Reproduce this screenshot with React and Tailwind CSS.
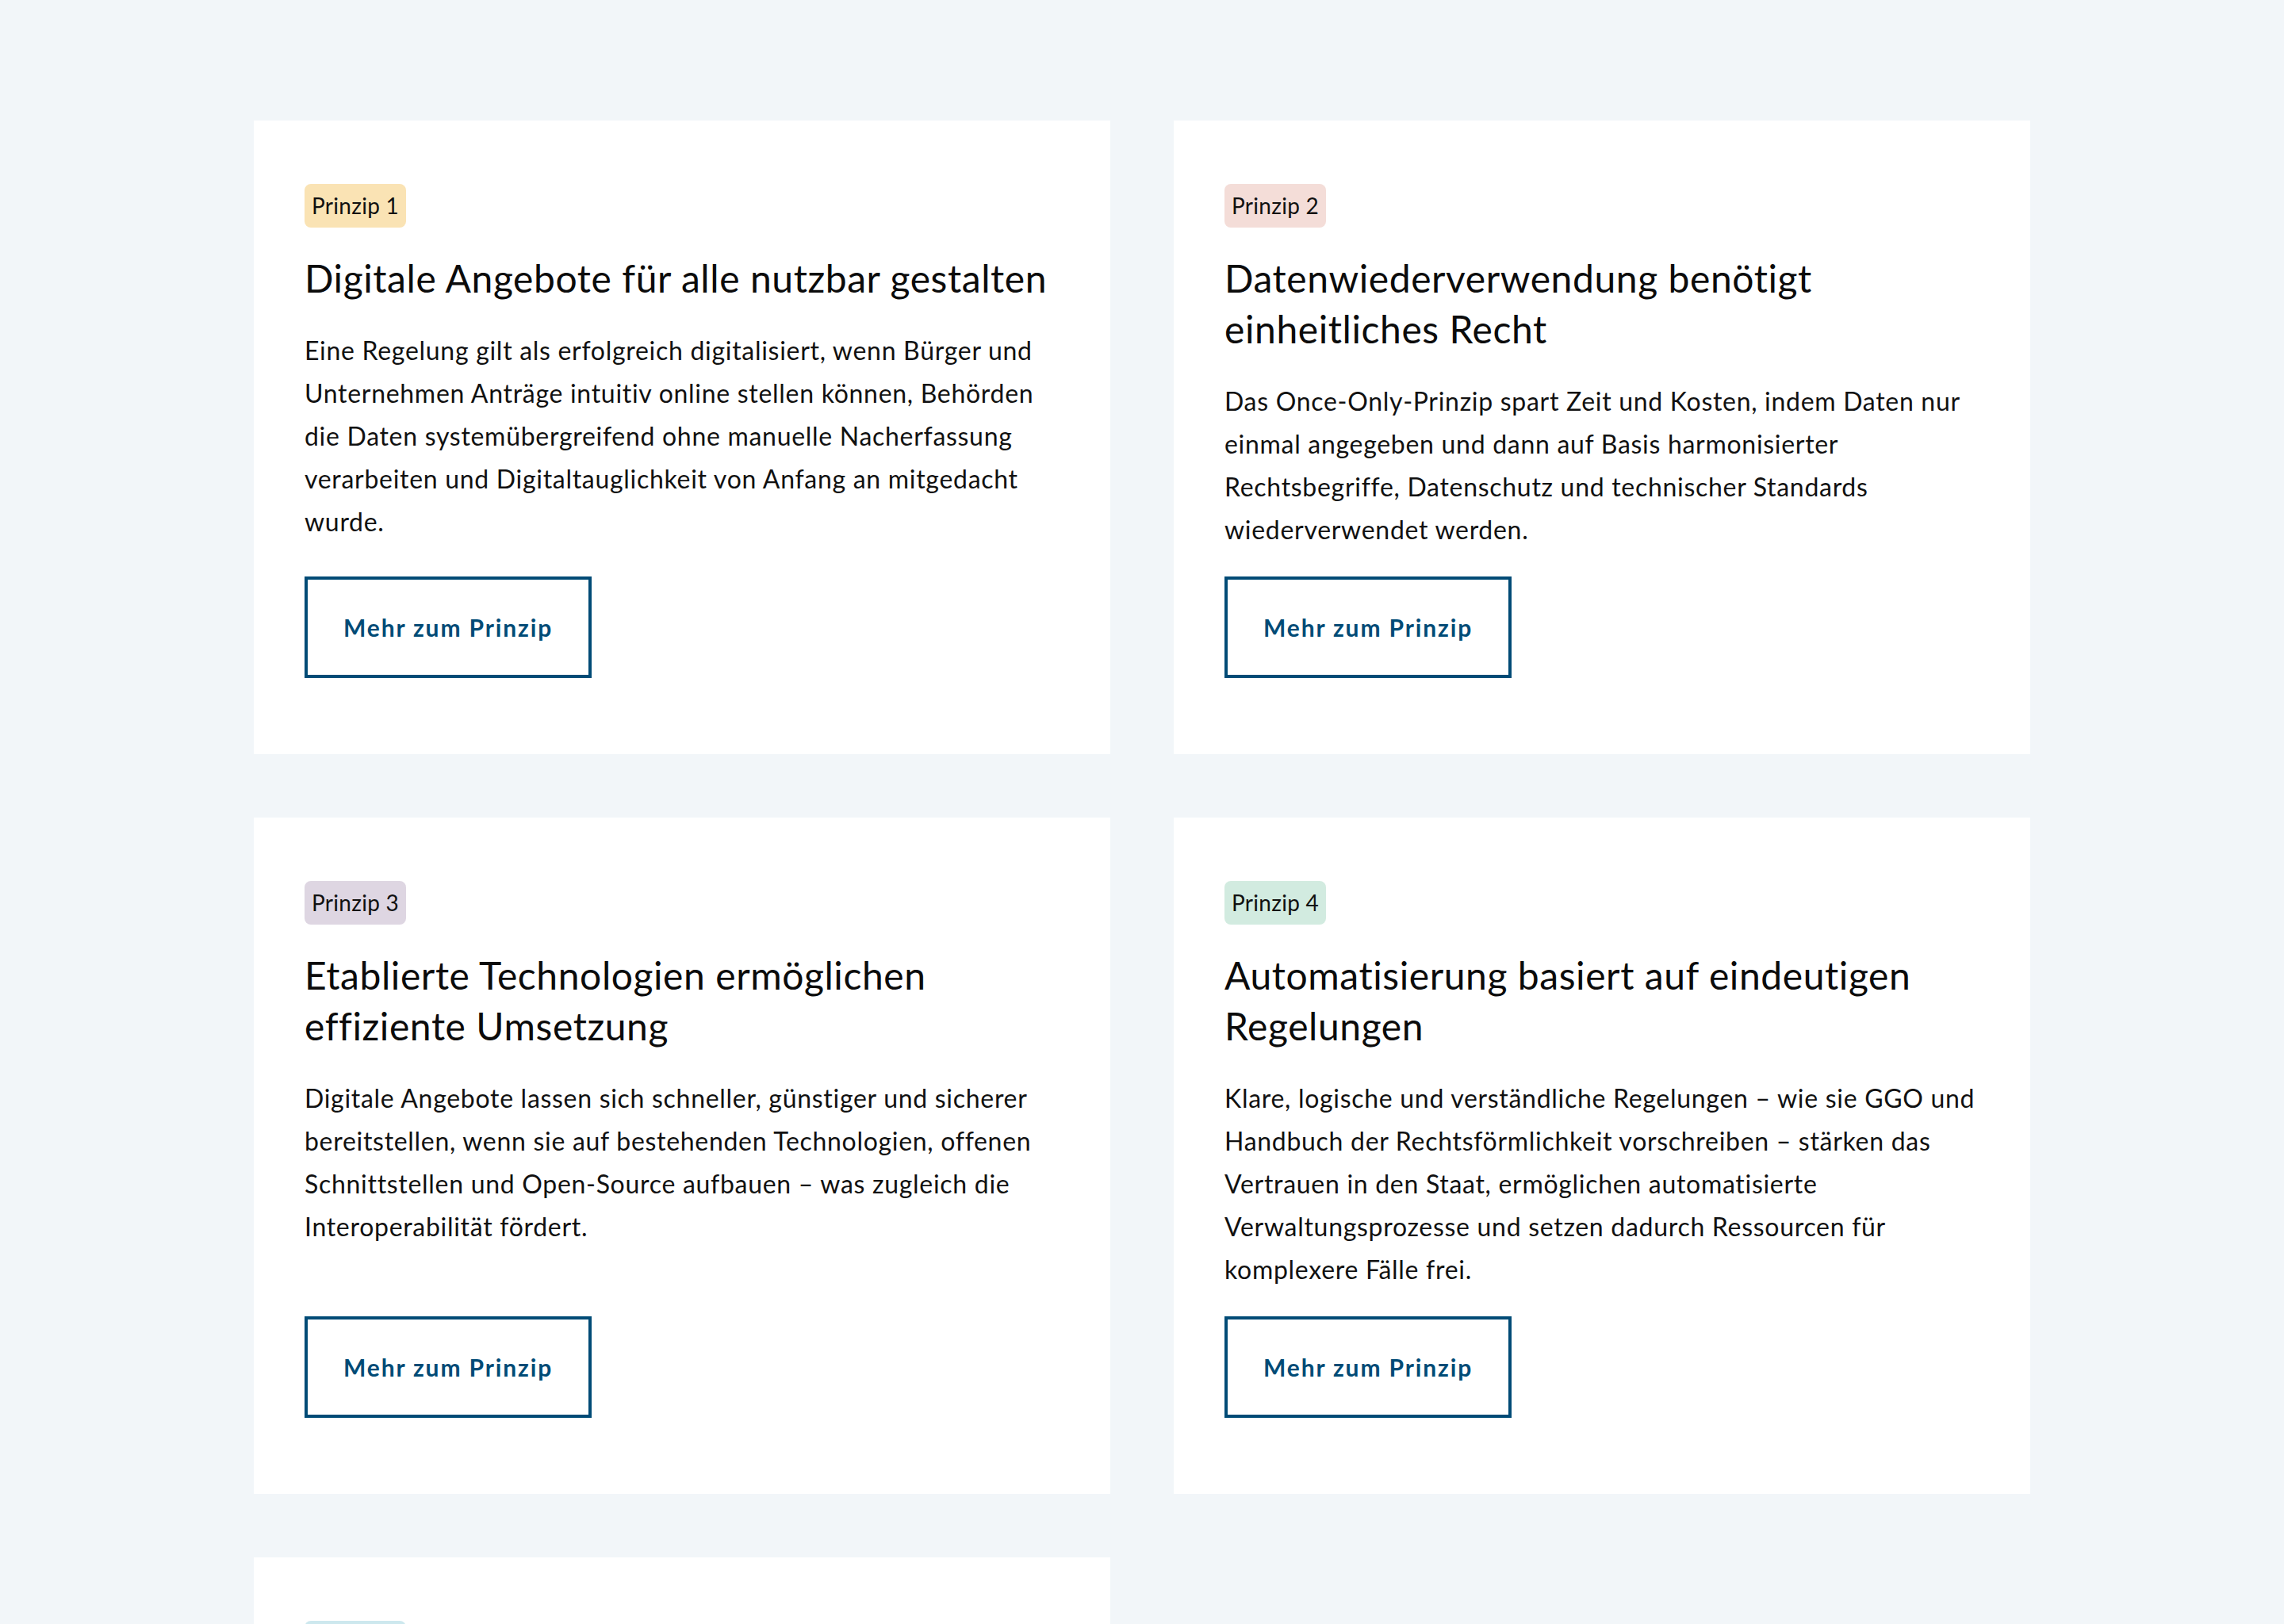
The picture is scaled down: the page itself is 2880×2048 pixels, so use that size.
const principles = [
  {
    label: "Prinzip 1",
    badge: "bg-[#fae3b4]",
    title: "Digitale Angebote für alle nutzbar gestalten",
    text: "Eine Regelung gilt als erfolgreich digitalisiert, wenn Bürger und Unternehmen Anträge intuitiv online stellen können, Behörden die Daten systemübergreifend ohne manuelle Nacherfassung verarbeiten und Digitaltauglichkeit von Anfang an mitgedacht wurde.",
  },
  {
    label: "Prinzip 2",
    badge: "bg-[#f4ddd8]",
    title: "Datenwiederverwendung benötigt einheitliches Recht",
    text: "Das Once-Only-Prinzip spart Zeit und Kosten, indem Daten nur einmal angegeben und dann auf Basis harmonisierter Rechtsbegriffe, Datenschutz und technischer Standards wiederverwendet werden.",
  },
  {
    label: "Prinzip 3",
    badge: "bg-[#ded6e2]",
    title: "Etablierte Technologien ermöglichen effiziente Umsetzung",
    text: "Digitale Angebote lassen sich schneller, günstiger und sicherer bereitstellen, wenn sie auf bestehenden Technologien, offenen Schnittstellen und Open-Source aufbauen – was zugleich die Interoperabilität fördert.",
  },
  {
    label: "Prinzip 4",
    badge: "bg-[#d2ebe0]",
    title: "Automatisierung basiert auf eindeutigen Regelungen",
    text: "Klare, logische und verständliche Regelungen – wie sie GGO und Handbuch der Rechtsförmlichkeit vorschreiben – stärken das Vertrauen in den Staat, ermöglichen automatisierte Verwaltungsprozesse und setzen dadurch Ressourcen für komplexere Fälle frei.",
  },
  {
    label: "Prinzip 5",
    badge: "bg-[#cde8ee]",
    title: "Datenschutz und Informationssicherheit von Anfang an mitdenken",
    text: "Digitale Verfahren schaffen Vertrauen, wenn Datenschutz und Informationssicherheit bereits bei der Gestaltung der Regelung berücksichtigt werden.",
  },
];

function PrincipleCard({ label, badge, title, text }) {
  return (
    <article className="flex flex-col bg-white px-[64px] pt-[80px] pb-[96px]">
      <span
        className={`self-start rounded-[8px] px-[9px] h-[55px] leading-[55px] text-[28px] tracking-[0.01em] text-[#111] ${badge}`}
      >
        {label}
      </span>
      <h3 className="mt-[32px] text-[48px] leading-[64px] tracking-[0.012em] font-normal text-[#0b0b0b]">
        {title}
      </h3>
      <p className="mt-[32px] mb-[32px] text-[32px] leading-[54px] tracking-[0.022em] text-[#111]">
        {text}
      </p>
      <a
        href="#"
        className="mt-auto self-start border-[4px] border-[#004b76] px-[45px] h-[128px] flex items-center text-[30px] tracking-[0.062em] font-bold text-[#004b76]"
      >
        Mehr zum Prinzip
      </a>
    </article>
  );
}

export default function App() {
  return (
    <div
      className="min-h-screen bg-[#f2f6f9] pt-[152px] pb-[160px]"
      style={{ fontFamily: "Lato, 'Open Sans', sans-serif" }}
    >
      <div className="mx-auto grid w-[2240px] grid-cols-2 gap-[80px]">
        {principles.map((p) => (
          <PrincipleCard key={p.label} {...p} />
        ))}
      </div>
    </div>
  );
}
